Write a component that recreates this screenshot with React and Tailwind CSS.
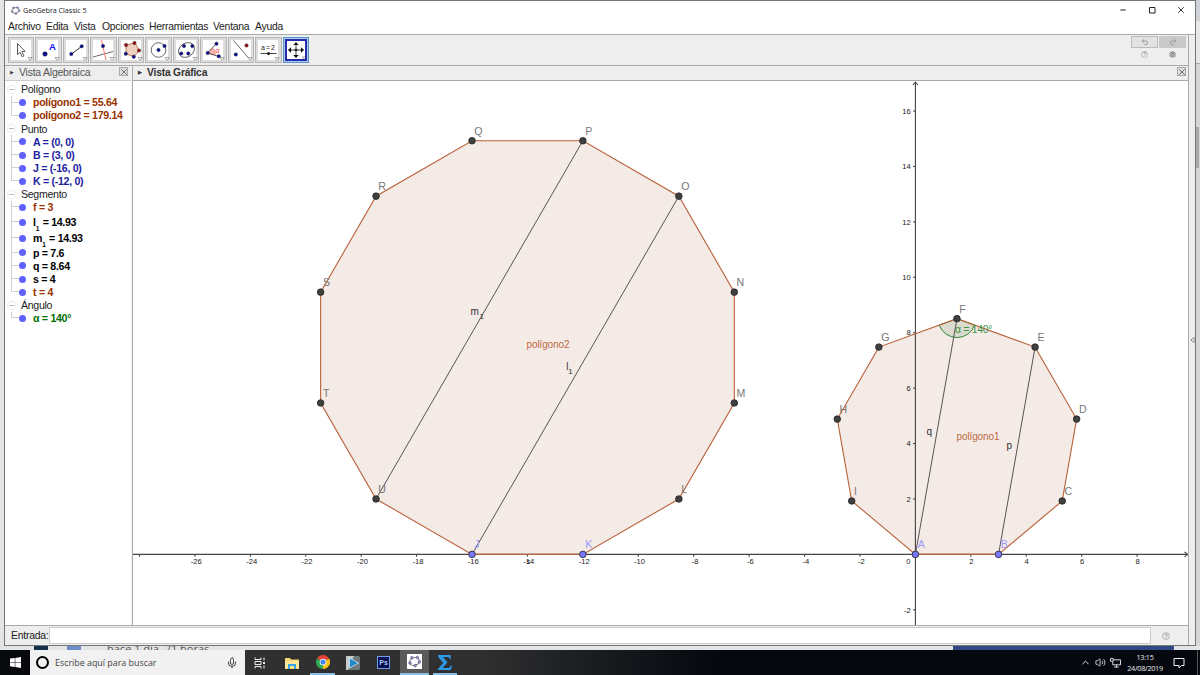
import { Minus, Square, X, Mic, Undo2, Redo2, ChevronUp, Volume2, Settings } from 'lucide-react'

const MENU = [
  { label: 'Archivo', width: 'w-[38px]' },
  { label: 'Edita', width: 'w-[28px]' },
  { label: 'Vista', width: 'w-[28px]' },
  { label: 'Opciones', width: 'w-[47px]' },
  { label: 'Herramientas', width: 'w-[64px]' },
  { label: 'Ventana', width: 'w-[42px]' },
  { label: 'Ayuda', width: 'w-[34px]' },
]

const ALGEBRA = [
  {
    title: 'Polígono',
    color: 'text-[#993300]',
    items: [{ name: 'polígono1', value: '55.64' }, { name: 'polígono2', value: '179.14' }],
  },
  {
    title: 'Punto',
    color: 'text-[#2222a0]',
    items: [
      { name: 'A', value: '(0, 0)' },
      { name: 'B', value: '(3, 0)' },
      { name: 'J', value: '(-16, 0)' },
      { name: 'K', value: '(-12, 0)' },
    ],
  },
  {
    title: 'Segmento',
    color: 'text-black',
    items: [
      { name: 'f', value: '3', color: 'text-[#993300]' },
      { name: 'l', sub: '1', value: '14.93' },
      { name: 'm', sub: '1', value: '14.93' },
      { name: 'p', value: '7.6' },
      { name: 'q', value: '8.64' },
      { name: 's', value: '4' },
      { name: 't', value: '4', color: 'text-[#993300]' },
    ],
  },
  {
    title: 'Ángulo',
    color: 'text-[#006e00]',
    items: [{ name: 'α', value: '140°' }],
  },
]

// Graphics view: origin in window pixels and pixels per unit
const OX = 915.4
const OY = 554.4
const UNIT = 27.71

const px = (x) => OX + x * UNIT
const py = (y) => OY - y * UNIT

// Vertices of a regular polygon built on the segment (x0,0)-(x0+side,0)
function regularPolygon(x0, side, names) {
  const n = names.length
  let x = x0
  let y = 0
  let angle = 0
  return names.map((name) => {
    const point = { name, x: px(x), y: py(y) }
    x += side * Math.cos(angle)
    y += side * Math.sin(angle)
    angle += (2 * Math.PI) / n
    return point
  })
}

const POLY1 = regularPolygon(0, 3, ['A', 'B', 'C', 'D', 'E', 'F', 'G', 'H', 'I'])
const POLY2 = regularPolygon(-16, 4, ['J', 'K', 'L', 'M', 'N', 'O', 'P', 'Q', 'R', 'S', 'T', 'U'])
const FREE = ['A', 'B', 'J', 'K']
const SEGMENTS = [['A', 'F'], ['B', 'E'], ['J', 'O'], ['U', 'P']]
const POINTS = [...POLY1, ...POLY2]
const find = (name) => POINTS.find((p) => p.name === name)

const X_TICKS = [-26, -24, -22, -20, -18, -16, -14, -12, -10, -8, -6, -4, -2, 2, 4, 6, 8]
const Y_TICKS = [16, 14, 12, 10, 8, 6, 4, 2, -2]

function Dot({ x, y, red, r = 1.7 }) {
  return <circle cx={x} cy={y} r={r} fill={red ? '#a00d14' : '#0c0c9c'} stroke="#222" strokeWidth="0.4" />
}

const TOOLS = [
  <path d="M6.500 3.500v11l2.600-2.200 2 4.400 1.800-.9-2-4.200 3.200-.3z" fill="#fff" stroke="#444" strokeWidth="0.9" />,
  <>
    <Dot x={7} y={14} r={2.3} />
    <text x="11" y="10" fontSize="9.500" fontWeight="bold" fill="#1111ff">A</text>
  </>,
  <>
    <path d="M5.500 14 15.500 6.500" stroke="#333" />
    <Dot x={5.3} y={14} />
    <Dot x={15.7} y={6.3} />
  </>,
  <>
    <path d="M0 17 20 11.500" stroke="#444" strokeWidth="0.8" />
    <path d="M8.500 0 13 20" stroke="#f77" strokeWidth="1" />
    <Dot x={10} y={6} />
  </>,
  <>
    <path d="M5 5 14 3 18.500 10.500 13 16.500 5 14z" fill="#efcfc0" stroke="#a0522d" strokeWidth="0.7" />
    <Dot x={5} y={5} red />
    <Dot x={13.5} y={3} red />
    <Dot x={18} y={10.5} red />
    <Dot x={12.8} y={16.8} />
    <Dot x={4.8} y={13.8} />
  </>,
  <>
    <circle cx="10.500" cy="10" r="7.300" fill="none" stroke="#444" strokeWidth="0.8" />
    <Dot x={10.5} y={10} />
    <Dot x={16.5} y={6} />
  </>,
  <>
    <ellipse cx="10.500" cy="10" rx="8.500" ry="6.800" fill="none" stroke="#444" strokeWidth="0.8" transform="rotate(-35 10.500 10)" />
    <Dot x={8} y={6} />
    <Dot x={16.3} y={6} />
    <Dot x={5.3} y={13.5} />
    <Dot x={12.3} y={13.5} />
  </>,
  <>
    <path d="M4.500 13 9.500 8Q13 10 12 15z" fill="#f9b4b4" stroke="#e66" strokeWidth="0.5" />
    <path d="M13.500 3.500 4.500 13 16 16.500" fill="none" stroke="#333" strokeWidth="0.8" />
    <text x="12.500" y="12.500" fontSize="7" fill="#f33">α</text>
    <Dot x={13.5} y={3.7} />
    <Dot x={4.7} y={13} />
    <Dot x={15.8} y={16.3} />
  </>,
  <>
    <path d="M2.500.5 18 18.500" stroke="#444" strokeWidth="0.8" />
    <Dot x={15.5} y={5.5} red />
    <Dot x={4.8} y={14.5} />
  </>,
  <>
    <text x="3" y="9.500" fontSize="7" fill="#222" textLength="14">a=2</text>
    <path d="M2.500 13.500h16" stroke="#333" strokeWidth="0.9" />
    <circle cx="10.500" cy="13.500" r="1.600" fill="#222" />
  </>,
  <>
    <path d="M10 3v14M3 10h14" stroke="#111" strokeWidth="0.9" />
    <path d="m10 1 3 3.500H7zM10 19l3-3.500H7zM1 10l3.500-3v6zM19 10l-3.500-3v6z" fill="#111" />
    <circle cx="10" cy="10" r="1.500" fill="#111" />
  </>,
]

function ToolButton({ children, selected }) {
  return (
    <div
      className={
        selected
          ? 'flex h-[26px] w-[26.5px] items-center justify-center border border-[#5b93c8] bg-[#a9cdec]'
          : 'flex h-[26px] w-[26.5px] items-center justify-center border border-[#b5b5b5] bg-[#dcdcdc]'
      }
    >
      <svg
        viewBox="0 0 20 20"
        className={
          selected
            ? "h-[22px] w-[22px] border-2 border-[#2a2aa8] bg-white font-['Liberation_Sans',sans-serif]"
            : "h-5 w-5 overflow-visible bg-white font-['Liberation_Sans',sans-serif]"
        }
      >
        {children}
        <path d="M17 17.500h4.200l-2.100 3z" fill="#fff" stroke="#888" strokeWidth="0.7" />
      </svg>
    </div>
  )
}

function GeoGebraLogo({ className }) {
  return (
    <svg viewBox="0 0 20 20" className={className}>
      <ellipse cx="10" cy="10" rx="6.500" ry="5.200" fill="none" stroke="#666" strokeWidth="1.300" transform="rotate(-20 10 10)" />
      {[[6.5, 5], [13.8, 4.7], [16.5, 10.5], [10.8, 15.5], [4, 12]].map(([x, y]) => (
        <circle key={x} cx={x} cy={y} r="1.700" fill="#9a9af2" stroke="#445" strokeWidth="0.8" />
      ))}
    </svg>
  )
}

function Help({ className }) {
  return (
    <svg viewBox="0 0 10 10" className={className}>
      <circle cx="5" cy="5" r="4.300" fill="none" stroke="#999" strokeWidth="0.9" />
      <text x="5" y="7.600" textAnchor="middle" fontSize="7" fill="#777">?</text>
    </svg>
  )
}

function CloseBox() {
  return (
    <span className="flex h-[9px] w-[9px] items-center justify-center border border-[#aaa] bg-[#e0e0e0]">
      <X className="h-[10px] w-[10px] shrink-0 text-[#555]" />
    </span>
  )
}

function AlgebraView() {
  return (
    <div className="flex-1 bg-white pt-[2px] text-[10.6px] tracking-[-0.3px]">
      {ALGEBRA.map((group) => (
        <div key={group.title}>
          <div className="flex h-[13.1px] items-center">
            <span className="ml-[2px] flex h-[9px] w-[9px] items-center justify-center rounded-sm border border-[#eee]">
              <span className="h-px w-[5px] bg-[#bbb]" />
            </span>
            <span className="ml-[5px] leading-none text-[#222]">{group.title}</span>
          </div>
          {group.items.map((item, i) => (
            <div key={item.name} className={item.sub ? 'flex h-[16.2px] items-center' : 'flex h-[13.1px] items-center'}>
              <span className="ml-[6px] flex h-full w-[9px] flex-col">
                <span className="h-1/2 border-b border-l border-[#d0d0d0]" />
                <span className={i < group.items.length - 1 ? 'h-1/2 border-l border-[#d0d0d0]' : 'h-1/2'} />
              </span>
              <span className="-ml-px h-[7px] w-[7px] rounded-full bg-[#6060ff]" />
              <span className={`ml-[7px] whitespace-nowrap font-bold leading-none ${item.color || group.color}`}>
                {item.name}
                {item.sub && <sub className="-bottom-[5px] mr-px text-[6.5px] leading-none">{item.sub}</sub>} = {item.value}
              </span>
            </div>
          ))}
        </div>
      ))}
    </div>
  )
}

function GraphicsView() {
  const f = find('F')
  return (
    <svg viewBox="133 81 1055 544" className="h-[544px] w-[1055px] bg-white font-['Liberation_Sans',sans-serif]">
      {[POLY1, POLY2].map((poly) => (
        <polygon key={poly[0].name} points={poly.map((p) => `${p.x},${p.y}`).join(' ')} fill="#f4eae6" />
      ))}

      <g stroke="#444" strokeWidth="1.1" fill="none">
        <path d={`M133 ${OY}H1187M1184.5 ${OY - 2.5}l3 2.5-3 2.5`} />
        <path d={`M${OX} 82V625M${OX - 2.5} 85l2.5-3 2.5 3`} />
        {[-28, ...X_TICKS].map((t) => <path key={t} d={`M${px(t)} ${OY}v2.3`} />)}
        {Y_TICKS.map((t) => <path key={t} d={`M${OX} ${py(t)}h-2.3`} />)}
      </g>
      <g fontSize="7.6" fill="#222">
        {X_TICKS.map((t) => (
          <text key={t} x={px(t) + (t < 0 ? 1.3 : 0.5)} y="564.2" textAnchor="middle">{t}</text>
        ))}
        {Y_TICKS.map((t) => (
          <text key={t} x="910.8" y={py(t) + 2.7} textAnchor="end">{t}</text>
        ))}
        <text x="906.3" y="564.2">0</text>
        {/* label of segment s, which sits on the axis numbers */}
        <text x="526.5" y="564.2">s</text>
      </g>

      <path
        d={`M${f.x} ${f.y}L${f.x - 17.8} ${f.y + 6.5}A19 19 0 0 0 ${f.x + 17.8} ${f.y + 6.5}Z`}
        fill="#006400"
        fillOpacity="0.1"
        stroke="#2e8b3a"
      />
      {[POLY1, POLY2].map((poly) => (
        <polygon
          key={poly[0].name}
          points={poly.map((p) => `${p.x},${p.y}`).join(' ')}
          fill="none"
          stroke="#b9623a"
          strokeWidth="1.1"
        />
      ))}
      {SEGMENTS.map(([a, b]) => (
        <line key={a} x1={find(a).x} y1={find(a).y} x2={find(b).x} y2={find(b).y} stroke="#555" strokeWidth="1" />
      ))}

      {POINTS.map((p) => (
        <g key={p.name}>
          <circle
            cx={p.x}
            cy={p.y}
            r="3.3"
            fill={FREE.includes(p.name) ? '#7878ff' : '#404040'}
            stroke="#222"
            strokeWidth="0.8"
          />
          <text x={p.x + 2.3} y={p.y - 6.1} fontSize="10.6" fill={FREE.includes(p.name) ? '#9a9aff' : '#777'}>
            {p.name}
          </text>
        </g>
      ))}

      <g fontSize="10" fill="#333">
        <text x="470.5" y="315">m</text>
        <text x="479.5" y="318.5" fontSize="8">1</text>
        <text x="566.3" y="370">l</text>
        <text x="568.3" y="373.5" fontSize="8">1</text>
        <text x="926.5" y="435">q</text>
        <text x="1006.5" y="449">p</text>
      </g>
      <g fontSize="10" fill="#bd6a44">
        <text x="526.5" y="347.5" textLength="43">polígono2</text>
        <text x="956.5" y="440" textLength="43">polígono1</text>
      </g>
      <text x="955" y="332.5" fontSize="10.4" fill="#3c9146" textLength="37.5">α = 140°</text>
    </svg>
  )
}

function Window() {
  return (
    <div className="ml-1 flex h-[646px] w-[1192px] flex-col border border-[#777] bg-[#eeeeee] font-['Liberation_Sans',sans-serif] text-[#222]">
      <div className="flex h-[18px] shrink-0 items-center bg-white pl-[5px] text-[#222]">
        <GeoGebraLogo className="h-[11px] w-[11px]" />
        <span className="ml-[2px] whitespace-nowrap font-['Open_Sans',sans-serif] text-[7.2px] tracking-[-0.05px]">GeoGebra Classic 5</span>
        <div className="ml-auto flex items-center gap-[20.5px] pr-[9px]">
          <Minus className="h-2 w-2" strokeWidth={3} />
          <svg viewBox="0 0 8 8" className="h-2 w-2" fill="none" stroke="#222">
            <path d="M1.500 1.500h5.500v5.500h-5.500z" />
          </svg>
          <X className="h-[10px] w-[10px]" strokeWidth={2.2} />
        </div>
      </div>
      <div className="flex h-[15px] shrink-0 items-center bg-white pl-[3px] pt-[2px] text-[10.4px] leading-none tracking-[-0.26px]">
        {MENU.map((item) => (
          <span key={item.label} className={`whitespace-nowrap ${item.width}`}>{item.label}</span>
        ))}
      </div>

      <div className="flex min-h-0 flex-1 border-t border-[#aaa]">
        <div className="flex w-[1183px] flex-col">
          <div className="flex h-[31px] shrink-0 items-center justify-between border-b border-[#aaa] pl-[2.5px] pr-[2px]">
            <div className="flex gap-px">
              {TOOLS.map((tool, i) => (
                <ToolButton key={i} selected={i === TOOLS.length - 1}>{tool}</ToolButton>
              ))}
            </div>
            <div className="flex gap-[1px] self-start pt-px">
              <div className="flex flex-col items-center gap-[3px]">
                <span className="flex h-[12px] w-[27px] items-center justify-center border border-[#bbb] bg-[#e2e2e2]">
                  <Undo2 className="h-2 w-2 text-[#999]" strokeWidth={2.8} />
                </span>
                <Help className="h-[7px] w-[7px]" />
              </div>
              <div className="flex flex-col items-center gap-[3px]">
                <span className="flex h-[12px] w-[27px] items-center justify-center bg-[#c9c9c9]">
                  <Redo2 className="h-2 w-2 text-[#999]" strokeWidth={2.8} />
                </span>
                <Settings className="h-[7px] w-[7px] text-[#888]" strokeWidth={3.5} />
              </div>
            </div>
          </div>

          <div className="flex min-h-0 flex-1 border-b border-[#aaa]">
            <div className="flex w-[126px] flex-col">
              <div className="flex h-[15px] shrink-0 items-center border-b border-[#ccc] pl-[5px] text-[10.5px] tracking-[-0.24px] text-[#555]">
                <span className="w-[9px] text-[5px] text-[#444]">▶</span>
                <span className="whitespace-nowrap">Vista Algebraica</span>
                <span className="-mt-[3px] ml-auto mr-[3px]"><CloseBox /></span>
              </div>
              <AlgebraView />
            </div>
            <div className="w-[2px] border-r border-[#aaa] bg-[#f4f4f4]" />
            <div className="flex flex-1 flex-col">
              <div className="flex h-[15px] shrink-0 items-center border-b border-[#aaa] pl-[5px] text-[10.3px] font-bold tracking-[-0.2px] text-[#333]">
                <span className="w-[9px] text-[5px]">▶</span>
                <span className="whitespace-nowrap">Vista Gráfica</span>
                <span className="-mt-[3px] ml-auto mr-[2px]"><CloseBox /></span>
              </div>
              <GraphicsView />
            </div>
          </div>

          <div className="flex h-[19px] shrink-0 items-center pl-[6px] text-[10.4px] tracking-[-0.22px]">
            <span className="w-[38px] pt-px">Entrada:</span>
            <div className="h-[17px] w-[1102px] border border-[#ccc] bg-white" />
            <Help className="ml-[11px] h-2 w-2" />
          </div>
        </div>
        <div className="flex flex-1 items-center justify-center border-l border-[#aaa]">
          <svg viewBox="0 0 6 8" className="h-2 w-[5px]">
            <path d="M5 1v6L1 4z" fill="#fff" stroke="#777" />
          </svg>
        </div>
      </div>
    </div>
  )
}

function Taskbar() {
  return (
    <div className="flex h-[25px] bg-linear-to-r from-[#303030] from-40% to-[#05080e] to-60%">
      <div className="flex w-[30px] items-center justify-center bg-[#07090d]">
        <svg viewBox="0 0 11 11" className="h-[11px] w-[11px]" fill="#fff">
          <path d="M0 1.600 4.800 1v4.200H0zM5.300.9 11 0v5.200H5.300zM0 5.800h4.800V10L0 9.300zM5.300 5.800H11V11l-5.700-.9z" />
        </svg>
      </div>
      <div className="flex w-[215px] items-center bg-[#f1f1f1] pl-[6px] text-[#444]">
        <span className="h-[13px] w-[13px] rounded-full border-2 border-black" />
        <span className="ml-[6px] whitespace-nowrap font-['Open_Sans',sans-serif] text-[8.9px]">Escribe aquí para buscar</span>
        <Mic className="ml-auto mr-[7px] h-3 w-3" />
      </div>
      <div className="flex w-[30px] items-center justify-center">
        <svg viewBox="0 0 12 12" className="h-3 w-3" fill="none" stroke="#eee">
          <path d="M1 .5v2h6v-2M1 11.500v-2h6v2M1 4.500h6v3H1zM10 .5v3M10 8.500v3" />
          <path d="M9 5h2v2H9z" fill="#eee" stroke="none" />
        </svg>
      </div>
      <div className="flex w-[33px] items-center justify-center">
        <svg viewBox="0 0 14 12" className="h-3 w-[14px]">
          <path d="M0 1h5l1 1.500h8V12H0z" fill="#f7d774" />
          <path d="M0 4h14v7H0z" fill="#ffe698" />
          <path d="M3 12V7h8v5H9V9H5v3z" fill="#38a3e0" />
        </svg>
      </div>
      <div className="ml-[2px] flex w-[25px] items-center justify-center border-b-2 border-[#86bfe8]">
        <svg viewBox="0 0 20 20" className="mt-[1px] h-[14px] w-[14px]">
          <path d="M10 10 1.300 5A10 10 0 0 1 18.700 5z" fill="#e34133" />
          <path d="M10 10 18.700 5A10 10 0 0 1 10 20z" fill="#fbc116" />
          <path d="M10 10v10A10 10 0 0 1 1.300 5z" fill="#2da94f" />
          <circle cx="10" cy="10" r="4.800" fill="#fff" />
          <circle cx="10" cy="10" r="3.700" fill="#4285f4" />
        </svg>
      </div>
      <div className="flex w-[36px] items-center justify-center">
        <svg viewBox="0 0 14 14" className="h-[14px] w-[14px]">
          <rect width="14" height="14" rx="1.500" fill="#6f7a7a" />
          <path d="M0 0h8L2 14H0z" fill="#c4cccc" />
          <path d="M3.500 2v10l9-5z" fill="#1c87c9" stroke="#e6f4fb" strokeWidth="0.7" />
        </svg>
      </div>
      <div className="flex w-[25px] items-center justify-center">
        <span className="flex h-[13px] w-[13px] items-center justify-center border border-[#6f9ce8] bg-[#0b1050] font-['Liberation_Sans',sans-serif] text-[7px] font-bold leading-none text-[#a9c9ff]">
          Ps
        </span>
      </div>
      <div className="ml-[4px] flex w-[29px] items-center justify-center border-b-2 border-[#86bfe8] bg-[#5a5a5a]">
        <GeoGebraLogo className="h-[15px] w-[15px] bg-white" />
      </div>
      <div className="ml-[4px] flex w-[24px] items-center justify-center border-b-2 border-[#86bfe8]">
        <svg viewBox="0 0 14 15" className="mt-[1px] h-[15px] w-[14px]">
          <path d="M0 0h12.500l.5 4h-1L10.500 2H5l4.500 5.200L4.500 13H11l2-2.500h1L12.800 15H0v-1l5.200-6L0 1.500z" fill="#2c9ae8" />
        </svg>
      </div>

      <div className="ml-auto flex items-center text-[#eee]">
        <ChevronUp className="h-[11px] w-[11px]" />
        <Volume2 className="ml-[4px] h-[11px] w-[11px]" strokeWidth={1.8} />
        <svg viewBox="0 0 12 11" className="ml-[4px] h-[10px] w-[11px]" fill="none" stroke="#eee">
          <path d="M4 2h7.500v5.500H3V4M.5.5h3v3h-3zM7 7.500V10M4.500 10h5" />
        </svg>
        <div className="ml-[5px] flex w-[38px] flex-col items-center font-['Open_Sans',sans-serif] text-[7.2px] leading-[11px] tracking-[-0.25px]">
          <span>13:15</span>
          <span>24/08/2019</span>
        </div>
        <svg viewBox="0 0 12 12" className="ml-[9px] mt-px h-3 w-3" fill="none" stroke="#eee">
          <path d="M1 1.500h10v7H8.500L6 11 6 8.500H1z" />
        </svg>
        <div className="ml-[12px] h-[25px] w-[3px] border-l border-[#555]" />
      </div>
    </div>
  )
}

export default function App() {
  return (
    <div className="flex h-[675px] w-[1200px] flex-col overflow-hidden bg-[#e2e4e5]">
      <div className="flex h-[646px] shrink-0">
        <Window />
        <div className="flex flex-1 flex-col bg-[#d6d6d6]">
          <div className="h-[21px] bg-[#cfd3d8]" />
          <div className="h-[43px] border-b border-[#aaa] bg-[#e8e8e8]" />
          <div className="mt-[63px] h-[41px] w-[3px] bg-[#a9a9a9]" />
        </div>
      </div>
      <div className="flex h-1 shrink-0 overflow-hidden">
        <div className="ml-[34px] w-[14px] bg-[#15304a]" />
        <div className="ml-[19px] w-[14px] bg-[#6d90c8]" />
        <div className="-mt-[4px] ml-[26px] w-[846px] whitespace-nowrap font-['Open_Sans',sans-serif] text-[11px] leading-[14px] text-[#555]">
          hace 1 día, 21 horas
        </div>
        <div className="w-[221px] bg-[#2f4a87]" />
      </div>
      <Taskbar />
    </div>
  )
}
